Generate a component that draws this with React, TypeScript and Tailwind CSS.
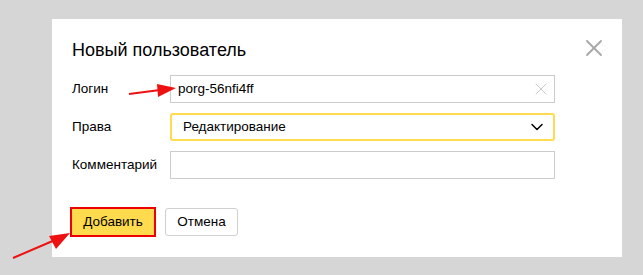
import { ChevronDown, X } from "lucide-react"

function Row({ label, children }: { label: string; children: React.ReactNode }) {
  return (
    <div className="flex items-center h-[28px]">
      <div className="w-[98px] text-[13.5px] text-black">{label}</div>
      {children}
    </div>
  )
}

export default function App() {
  return (
    <div
      className="relative w-[643px] h-[275px] bg-[#d6d6d6] pt-[19px] pl-[52px] overflow-hidden"
      style={{ fontFamily: '"Liberation Sans", Arial, sans-serif' }}
    >
      <div className="relative w-[570px] h-[238px] bg-white pl-[20px] pt-[19px]">
        <h2 className="text-[18px] leading-[24px] text-black">Новый пользователь</h2>

        <button className="absolute left-[528px] top-[15px] text-[#a8a8a8]">
          <X size={28} strokeWidth={1.6} />
        </button>

        <div className="mt-[13px] flex flex-col gap-[10px]">
          <Row label="Логин">
            <div className="w-[385px] h-[28px] border border-[#cccccc] flex items-center pl-[7px] pr-[3px]">
              <span className="flex-1 text-[13.5px] text-black">porg-56nfi4ff</span>
              <X size={20} strokeWidth={0.9} className="text-[#b5b5b5]" />
            </div>
          </Row>
          <Row label="Права">
            <div className="w-[385px] h-[28px] border-2 border-[#ffdb4d] rounded-[3px] flex items-center pl-[11px] pr-[6px]">
              <span className="flex-1 text-[13.5px] text-black">Редактирование</span>
              <ChevronDown size={20} strokeWidth={1.8} className="text-black" />
            </div>
          </Row>
          <Row label="Комментарий">
            <div className="w-[385px] h-[28px] border border-[#cccccc]" />
          </Row>
        </div>

        <div className="mt-[28px] flex items-center gap-[9px] -ml-[2px]">
          <button className="w-[86px] h-[30px] border-2 border-[#ee0000] bg-[#ffdb4d] text-[13.5px] text-black">
            Добавить
          </button>
          <button className="w-[73px] h-[28px] border border-[#d0d0d0] rounded-[3px] bg-white text-[13.5px] text-black">
            Отмена
          </button>
        </div>
      </div>

      {/* red annotation arrows */}
      <svg className="absolute inset-0 pointer-events-none" width="643" height="275">
        <line x1="129" y1="94" x2="160" y2="90" stroke="#ee1111" strokeWidth="2" />
        <polygon points="157,84 176,88 158,97" fill="#ee1111" />
        <line x1="13" y1="258" x2="55" y2="240" stroke="#ee1111" strokeWidth="2" />
        <polygon points="49,236 70,233 56,249" fill="#ee1111" />
      </svg>
    </div>
  )
}
